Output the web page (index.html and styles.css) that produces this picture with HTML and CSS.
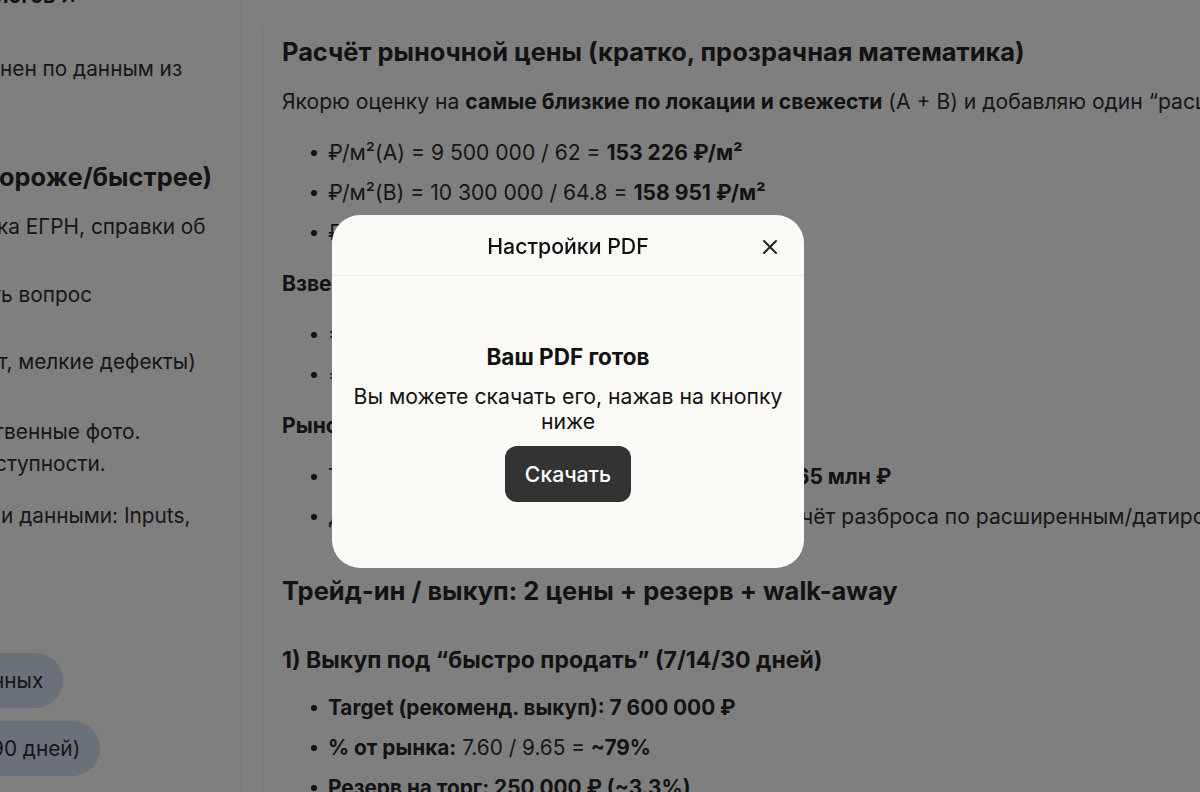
FILE: index.html
```html
<!DOCTYPE html>
<html lang="ru">
<head>
<meta charset="utf-8">
<title>Настройки PDF</title>
<link rel="stylesheet" href="styles.css">
</head>
<body>
<div class="app">
  <aside class="side">
    <div class="s-top">логов ↗</div>
    <div class="s-line s1">нен по данным из</div>
    <div class="s-head">орожe/быстрее)</div>
    <div class="s-line s2 cut2">ка ЕГРН, справки об</div>
    <div class="s-line s3 cut8">ть вопрос</div>
    <div class="s-line s4 cut3">т, мелкие дефекты)</div>
    <div class="s-line s5 cut6">твенные фото.</div>
    <div class="s-line s6 cut5">ступности.</div>
    <div class="s-line s7 push1">и данными: Inputs,</div>
    <div class="chips">
      <div class="chip"><span class="chip-t c1">нных</span></div>
      <div class="chip"><span class="chip-t c2">90 дней)</span></div>
    </div>
  </aside>
  <main class="main">
    <h2 class="h2 first">Расчёт рыночной цены (кратко, прозрачная математика)</h2>
    <p class="p">Якорю оценку на <b>самые близкие по локации и свежести</b> (A + B) и добавляю один “расширенный” аналог (C) для проверки разброса.</p>
    <ul class="list">
      <li><span>₽/м²(A) = 9 500 000 / 62 = <b>153 226 ₽/м²</b></span></li>
      <li><span>₽/м²(B) = 10 300 000 / 64.8 = <b>158 951 ₽/м²</b></span></li>
      <li><span>₽/м²(C) = 9 100 000 / 61 = <b>149 180 ₽/м²</b></span></li>
    </ul>
    <p class="p"><b>Взвешенная ставка</b> (веса: 40% A, 40% B, 20% C):</p>
    <ul class="list">
      <li><span>= 0.4 × 153 226 + 0.4 × 158 951 + 0.2 × 149 180</span></li>
      <li><span>= <b>154 707 ₽/м²</b></span></li>
    </ul>
    <p class="p"><b>Рыночная цена (база):</b></p>
    <ul class="list">
      <li><span>Точечная оценка: 62.4 м² × 154 707 ₽/м² ≈ <b>9.65 млн ₽</b></span></li>
      <li><span>Диапазон по рынку: ≈ 9.40–9.90 млн ₽ — расчёт разброса по расширенным/датированным аналогам</span></li>
    </ul>
    <h2 class="h2 second">Трейд-ин / выкуп: 2 цены + резерв + walk-away</h2>
    <h3 class="h3">1) Выкуп под “быстро продать” (7/14/30 дней)</h3>
    <ul class="list last">
      <li><span><b>Target (рекоменд. выкуп): 7 600 000 ₽</b></span></li>
      <li><span><b>% от рынка:</b> 7.60 / 9.65 = <b>~79%</b></span></li>
      <li><span><b>Резерв на торг: 250 000 ₽ (~3.3%)</b></span></li>
    </ul>
  </main>
</div>
<div class="overlay"></div>
<div class="modal" role="dialog">
  <div class="m-head">
    <div class="m-title">Настройки PDF</div>
    <button class="m-close" aria-label="Закрыть">
      <svg width="16" height="16" viewBox="0 0 16 16"><path d="M2 2 L14 14 M14 2 L2 14" stroke="#222" stroke-width="2" stroke-linecap="round" fill="none"/></svg>
    </button>
  </div>
  <div class="m-body">
    <div class="m-h">Ваш PDF готов</div>
    <div class="m-text">Вы можете скачать его, нажав на кнопку ниже</div>
    <button class="m-btn">Скачать</button>
  </div>
</div>
</body>
</html>
```
FILE: styles.css
```css
* { box-sizing: border-box; }
html, body { margin: 0; padding: 0; }
body {
  width: 1200px;
  height: 792px;
  overflow: hidden;
  background: #ffffff;
  font-family: Inter, "Noto Sans", "Liberation Sans", sans-serif;
  color: #2e2e2e;
}
b { font-weight: 700; color: #262626; }

.app {
  display: flex;
  height: 792px;
  overflow: hidden;
}

/* left column (cut off at the left edge) */
.side {
  width: 242px;
  flex: none;
  border-right: 1px solid #ececec;
  overflow: hidden;
  font-size: 20.8px;
  white-space: nowrap;
}
.s-top { font-weight: 700; font-size: 20.8px; line-height: 24px; margin-top: -16px; margin-left: -4px; color: #262626; }
.s-line { line-height: 32px; }
.s1 { margin-top: 45px; }
.s-head { font-size: 25.4px; font-weight: 700; line-height: 32px; margin-top: 76px; margin-left: -1px; color: #262626; }
.s2 { margin-top: 18px; }
.s3 { margin-top: 36px; }
.s4 { margin-top: 35px; }
.s5 { margin-top: 38px; }
.s6 { margin-top: 0; }
.s7 { margin-top: 20px; }
.push1 { margin-left: 1px; }
.cut2 { margin-left: -3px; }
.cut3 { margin-left: -2px; }
.cut5 { margin-left: -5px; }
.cut6 { margin-left: -6px; }
.cut8 { margin-left: -9px; }
.chips { margin-top: 121px; display: flex; flex-direction: column; gap: 13px; align-items: flex-start; }
.chip {
  height: 55px;
  display: flex;
  align-items: center;
  margin-left: -80px;
  padding: 0 20px 0 80px;
  background: #d7e2f3;
  border-radius: 28px;
}
.c1 { margin-left: -8px; }
.c2 { margin-left: -9px; }

/* main column */
.main {
  flex: 1;
  margin-left: 20px;
  margin-top: 25px;
  border-left: 1px solid #ececec;
  padding: 11px 0 0 19px;
  overflow: hidden;
  white-space: nowrap;
  font-size: 21.1px;
}
.h2 { margin: 0; font-size: 25.4px; line-height: 32px; font-weight: 700; color: #262626; }
.h2.second { margin-top: 44px; font-size: 25.5px; }
.h3 { margin: 39px 0 0; font-size: 23px; line-height: 28px; font-weight: 700; color: #262626; }
.p { margin: 23px 0 0; line-height: 28px; }
.h2.first + .p { margin-top: 20px; }
.list { list-style: none; margin: 23px 0 0; padding: 0 0 0 29px; display: flex; flex-direction: column; gap: 12px; }
.h3 + .list { margin-top: 20px; }
.list.last { font-size: 20.8px; }
.list li { display: flex; align-items: center; line-height: 28px; }
.list li::before {
  content: "";
  width: 6px; height: 6px;
  border-radius: 50%;
  background: #262626;
  margin-right: 11px;
  flex: none;
}

/* overlay and dialog */
.overlay {
  position: fixed;
  inset: 0;
  background: rgba(0, 0, 0, 0.5);
}
.modal {
  position: absolute;
  left: 332px;
  top: 215px;
  width: 472px;
  height: 353px;
  background: #fbfaf6;
  border-radius: 28px;
  display: flex;
  flex-direction: column;
  color: #111;
}
.m-head {
  height: 61px;
  flex: none;
  display: flex;
  align-items: center;
  justify-content: center;
  border-bottom: 1px solid #e8eaec;
  position: relative;
}
.m-title { font-size: 21.3px; font-weight: 500; line-height: 28px; padding-top: 1px; }
.m-close {
  position: absolute;
  right: 24px;
  top: 22px;
  width: 20px; height: 20px;
  border: 0; padding: 2px;
  background: transparent;
  display: flex; align-items: center; justify-content: center;
}
.m-body {
  flex: 1;
  display: flex;
  flex-direction: column;
  align-items: center;
  justify-content: center;
  padding: 0 18px;
  text-align: center;
}
.m-h { font-size: 22.5px; font-weight: 700; line-height: 28px; }
.m-text { font-size: 21.2px; line-height: 25px; margin-top: 13px; }
.m-btn {
  margin-top: 12px;
  height: 56px;
  padding: 0 20px;
  border: 0;
  border-radius: 12px;
  background: #333;
  color: #fff;
  font-family: inherit;
  font-size: 21.2px;
  font-weight: 500;
}
```
